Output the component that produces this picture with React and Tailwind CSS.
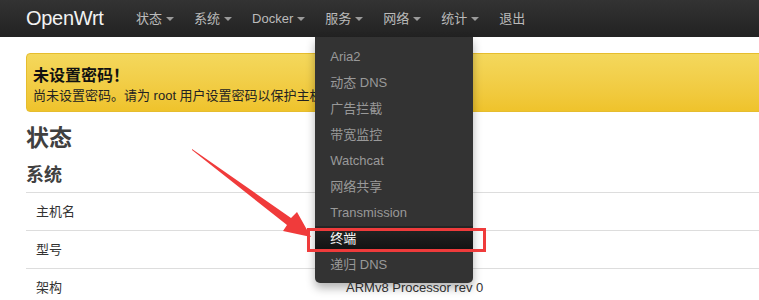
import React from "react";

const NAV = [
  { label: "状态", caret: true },
  { label: "系统", caret: true },
  { label: "Docker", caret: true },
  { label: "服务", caret: true, open: true },
  { label: "网络", caret: true },
  { label: "统计", caret: true },
  { label: "退出", caret: false },
];

const SERVICES = [
  "Aria2",
  "动态 DNS",
  "广告拦截",
  "带宽监控",
  "Watchcat",
  "网络共享",
  "Transmission",
  "终端",
  "递归 DNS",
];

const ROWS = [
  { label: "主机名", value: "" },
  { label: "型号", value: "" },
  { label: "架构", value: "ARMv8 Processor rev 0" },
];

const font = "font-['Liberation_Sans','Noto_Sans_CJK_SC',sans-serif]";

function Caret() {
  return (
    <span className="ml-1 inline-block h-0 w-0 border-x-4 border-t-4 border-x-transparent border-t-[#9a9a9a] align-middle" />
  );
}

function ServiceMenu() {
  return (
    <div className="absolute left-0 top-[37px] z-10 w-[158px] rounded-b-[5px] bg-[#333] pb-[5px] pt-[7px] shadow-[0_5px_10px_rgba(0,0,0,0.3)]">
      {SERVICES.map((s) => (
        <div
          key={s}
          className={`h-[26px] pl-[15px] text-[13px] leading-[26px] ${
            s === "终端"
              ? "bg-linear-to-b from-[#262626] to-[#111] text-white"
              : "text-[#999]"
          }`}
        >
          {s}
        </div>
      ))}
    </div>
  );
}

export default function App() {
  return (
    <div className={`relative h-[300px] w-full overflow-hidden bg-white ${font}`}>
      {/* Navbar */}
      <div className="flex h-[37px] items-center bg-linear-to-b from-[#333] to-[#222] pl-[26px]">
        <div className="w-[100px] text-[20px] leading-[37px] tracking-[-0.3px] text-[#f2f2f2]">OpenWrt</div>
        <div className="flex h-full">
          {NAV.map((n) => (
            <div key={n.label} className="relative flex h-full items-center px-[10px] text-[13px] text-[#bbb]">
              <span>{n.label}</span>
              {n.caret && <Caret />}
              {n.open && <ServiceMenu />}
            </div>
          ))}
        </div>
      </div>

      {/* Content */}
      <div className="w-[960px] pl-[26px]">
        <div className="mt-[16px] rounded-[4px] border border-[#e6bd2e] bg-linear-to-b from-[#f4d85c] to-[#efc32b] px-[6px] pb-[4px] pt-[9px]">
          <div className="font-['Noto_Sans_CJK_SC',sans-serif] text-[16px] font-bold leading-[22px] text-[#111]">
            未设置密码！
          </div>
          <div className="text-[13px] leading-[22px] text-[#222]">
            尚未设置密码。请为 root 用户设置密码以保护主机并开启 SSH。
          </div>
        </div>

        <h2 className="mt-[11px] text-[23px] font-bold leading-[30px] text-[#404040]">状态</h2>
        <h3 className="mt-[10px] text-[18px] font-bold leading-[24px] text-[#404040]">系统</h3>

        <div className="mt-[5px]">
          {ROWS.map((r) => (
            <div key={r.label} className="flex h-[38px] items-center border-t border-[#ddd] text-[13px] text-[#333]">
              <div className="w-[310px] pl-[10px]">{r.label}</div>
              <div className="pl-[10px]">{r.value}</div>
            </div>
          ))}
        </div>
      </div>

      {/* Annotation: arrow + highlight box */}
      <svg className="pointer-events-none absolute left-0 top-0 z-20" width="759" height="300">
        <polygon
          points="192,149 291,218 297,212 311,237 283,231 287,225 192,150"
          fill="#f03b3b"
        />
      </svg>
      <div className="pointer-events-none absolute left-[307px] top-[228px] z-20 h-[24px] w-[179px] border-[3px] border-[#ef3b3b]" />
    </div>
  );
}
